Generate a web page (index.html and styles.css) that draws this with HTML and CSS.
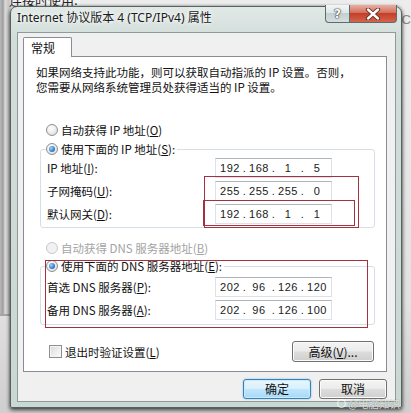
FILE: index.html
```html
<!DOCTYPE html>
<html lang="zh-CN">
<head>
    <meta charset="UTF-8">
    <title>Internet 协议版本 4 (TCP/IPv4) 属性</title>
    <link rel="stylesheet" href="styles.css">
</head>
<body>
<div class="desk">
    <div class="back-win">
        <p class="back-title">连接时使用:</p>
    </div>
    <span class="back-letter">C</span>
</div>

<div class="dialog">
    <div class="titlebar">
        <span class="title">Internet 协议版本 4 (TCP/IPv4) 属性</span>
        <div class="caption-btns">
            <span class="cap-help">?</span>
            <span class="cap-close">
                <svg width="16" height="12" viewBox="0 0 16 12">
                    <path d="M3 1.5 L13 10.5 M13 1.5 L3 10.5" stroke="#5a2a22" stroke-width="4.2" stroke-linecap="round"/>
                    <path d="M3 1.5 L13 10.5 M13 1.5 L3 10.5" stroke="#fff" stroke-width="2.4" stroke-linecap="round"/>
                </svg>
            </span>
        </div>
    </div>

    <div class="client">
        <div class="tabs"><span class="tab">常规</span></div>
        <div class="panel">
            <div class="intro">
                <p>如果网络支持此功能，则可以获取自动指派的 IP 设置。否则，</p>
                <p>您需要从网络系统管理员处获得适当的 IP 设置。</p>
            </div>

            <div class="opt first-opt"><span class="radio"></span>自动获得 IP 地址(<u>O</u>)</div>
            <fieldset class="group ip-group">
                <legend class="opt"><span class="radio on"></span>使用下面的 IP 地址(<u>S</u>):</legend>
                <div class="row">
                    <span>IP 地址(<u>I</u>):</span>
                    <div class="ipbox"><span>192</span><i>.</i><span>168</span><i>.</i><span>1</span><i>.</i><span>5</span></div>
                </div>
                <div class="row">
                    <span>子网掩码(<u>U</u>):</span>
                    <div class="ipbox"><span>255</span><i>.</i><span>255</span><i>.</i><span>255</span><i>.</i><span>0</span></div>
                </div>
                <div class="row">
                    <span>默认网关(<u>D</u>):</span>
                    <div class="ipbox"><span>192</span><i>.</i><span>168</span><i>.</i><span>1</span><i>.</i><span>1</span></div>
                </div>
            </fieldset>

            <div class="opt dns-opt disabled"><span class="radio"></span>自动获得 DNS 服务器地址(<u>B</u>)</div>
            <fieldset class="group dns-group">
                <legend class="opt"><span class="radio on"></span>使用下面的 DNS 服务器地址(<u>E</u>):</legend>
                <div class="row">
                    <span>首选 DNS 服务器(<u>P</u>):</span>
                    <div class="ipbox"><span>202</span><i>.</i><span>96</span><i>.</i><span>126</span><i>.</i><span>120</span></div>
                </div>
                <div class="row">
                    <span>备用 DNS 服务器(<u>A</u>):</span>
                    <div class="ipbox"><span>202</span><i>.</i><span>96</span><i>.</i><span>126</span><i>.</i><span>100</span></div>
                </div>
            </fieldset>

            <div class="bottom-row">
                <div class="check-opt"><span class="check"></span>退出时验证设置(<u>L</u>)</div>
                <button class="btn adv-btn">高级(<u>V</u>)...</button>
            </div>
        </div>
        <div class="actions">
            <button class="btn default-btn">确定</button>
            <button class="btn">取消</button>
        </div>
    </div>
</div>

<div class="mark mark-mask"></div>
<div class="mark mark-gw"></div>
<div class="mark mark-dns"></div>

<span class="watermark"><b class="wm-logo"></b>@电脑知识</span>
</body>
</html>
```

FILE: styles.css
```css
* {
    margin: 0;
    padding: 0;
    box-sizing: border-box;
}

body {
    width: 411px;
    height: 413px;
    overflow: hidden;
    position: relative;
    background: #dedede;
    font-family: "Noto Sans CJK SC", "Noto Sans", sans-serif;
    font-size: 11.5px;
    line-height: 16px;
    color: #111;
}

u {
    text-decoration: underline;
    text-underline-offset: 1px;
}

/* desktop behind the dialog */
.desk {
    position: absolute;
    inset: 0;
    background: linear-gradient(180deg, #ececec 0, #e2e2e2 300px, #cfcfcf 100%);
}

.back-win {
    position: absolute;
    left: 0;
    top: 0;
    width: 80px;
    height: 316px;
    background: linear-gradient(90deg, #b9b9b9 0, #9d9d9d 3px, #dadada 5px, #c4c4c4 9px, #f2f2f2 12px);
    border-bottom: 2px solid #a5a5a5;
}

.back-title {
    position: absolute;
    left: 9px;
    top: -8px;
    font-size: 13px;
    color: #222;
}

.back-letter {
    position: absolute;
    right: 0;
    top: 12px;
    font-family: "Liberation Sans", sans-serif;
    font-size: 13px;
    color: #888;
}

/* window */
.dialog {
    position: absolute;
    left: 10px;
    top: 6px;
    width: 392px;
    height: 402px;
    border: 1px solid #56625f;
    border-radius: 7px 7px 2px 2px;
    background: linear-gradient(180deg, #e1e9e7 0, #d2ddda 30px, #c9d8d3 100%);
    box-shadow: 0 2px 4px rgba(0, 0, 0, .65), 0 0 3px rgba(0, 0, 0, .35);
    display: flex;
    flex-direction: column;
}

.titlebar {
    height: 25px;
    display: flex;
    align-items: flex-start;
    padding: 0 4px 0 6px;
}

.title {
    margin-top: 3px;
    font-family: "Noto Sans", "Noto Sans CJK SC", sans-serif;
    font-size: 12px;
    line-height: 15px;
    color: #1a1a1a;
    text-shadow: 0 0 6px #fff, 0 0 3px #fff;
}

.caption-btns {
    margin-left: auto;
    margin-top: -2px;
    display: flex;
}

.cap-help,
.cap-close {
    height: 18px;
    display: flex;
    align-items: center;
    justify-content: center;
    border: 1px solid #5e6b6c;
    border-top: none;
}

.cap-help {
    width: 25px;
    border-radius: 0 0 0 4px;
    background: linear-gradient(180deg, #f3f6f6 0, #dfe6e7 45%, #c4cfd1 50%, #d5dfe0 100%);
    font-family: "DejaVu Sans", sans-serif;
    font-weight: bold;
    font-size: 12px;
    color: #fff;
    text-shadow: 0 0 1px #333, 0 0 1px #333, 0 0 2px #555;
}

.cap-close {
    width: 47px;
    border-left: none;
    border-radius: 0 0 4px 0;
    background: linear-gradient(180deg, #e8b0a4 0, #d4705c 45%, #c2402a 50%, #d6634a 100%);
}

.client {
    flex: 1;
    margin: 0 5px 5px 6px;
    border: 1px solid #8e9b99;
    background: #f0f0f0;
    padding: 4px 8px 2px 5px;
    display: flex;
    flex-direction: column;
}

.tabs {
    display: flex;
    position: relative;
    z-index: 1;
    margin-bottom: -1px;
}

.tab {
    width: 49px;
    height: 20px;
    padding-left: 7px;
    border: 1px solid #898c95;
    border-bottom: none;
    border-radius: 2px 2px 0 0;
    background: #fff;
    font-size: 12px;
    line-height: 19px;
}

.panel {
    height: 316px;
    border: 1px solid #898c95;
    background: #fff;
    padding: 8px 0 9px 0;
    display: flex;
    flex-direction: column;
}

.intro {
    padding-left: 12px;
    line-height: 15px;
}

.opt {
    display: flex;
    align-items: center;
    height: 16px;
    white-space: nowrap;
}

.first-opt {
    margin: 27px 0 0 22px;
}

.dns-opt {
    margin: 12px 0 0 22px;
}

.disabled {
    color: #a3a3a3;
}

.radio {
    width: 12px;
    height: 12px;
    margin-right: 3px;
    border: 1px solid #8d8f91;
    border-radius: 50%;
    background: radial-gradient(circle at 40% 35%, #fff 0, #f0f0f0 40%, #d6d6d6 100%);
    position: relative;
}

.disabled .radio {
    border-color: #c9c9c9;
    background: #f1f1f1;
}

.radio.on::after {
    content: "";
    position: absolute;
    left: 2px;
    top: 2px;
    width: 6px;
    height: 6px;
    border-radius: 50%;
    background: radial-gradient(circle at 35% 35%, #9fd4ff 0, #3a86d4 55%, #144e96 100%);
}

.group {
    border: 1px solid #d5dfe5;
    border-radius: 3px;
    margin: 3px 11px 0 16px;
    padding: 1px 42px 3px 6px;
}

.dns-group {
    margin-top: 2px;
    padding: 3px 42px 4px 6px;
}

.group legend {
    margin-left: -1px;
    padding-right: 2px;
}

.row {
    display: flex;
    align-items: center;
    justify-content: space-between;
    height: 20px;
    margin-bottom: 3px;
}

.row:last-child {
    margin-bottom: 0;
}

.ipbox {
    width: 117px;
    height: 20px;
    border: 1px solid #dde2e8;
    border-top-color: #b0b5bc;
    padding-left: 2px;
    display: flex;
    align-items: center;
    font-family: "Liberation Sans", sans-serif;
    font-size: 11px;
    letter-spacing: .6px;
    color: #1a1a1a;
}

.ipbox span {
    width: 24px;
    text-align: center;
}

.ipbox i {
    width: 5px;
    font-style: normal;
    text-align: center;
}

.bottom-row {
    margin: 16px 12px 0 25px;
    height: 21px;
    display: flex;
    align-items: center;
    justify-content: space-between;
}

.check-opt {
    display: flex;
    align-items: center;
}

.check {
    width: 13px;
    height: 13px;
    margin-right: 3px;
    border: 1px solid #8e8f8f;
    background: linear-gradient(135deg, #d9d9d9 0, #f0f0f0 60%, #fafafa 100%);
    box-shadow: inset 0 0 0 1px #f4f4f4;
}

.btn {
    height: 21px;
    border: 1px solid #707070;
    border-radius: 3px;
    background: linear-gradient(180deg, #f4f4f4 0, #ebebeb 48%, #dcdcdc 52%, #cfcfcf 100%);
    box-shadow: inset 0 0 0 1px #fbfbfb;
    font-family: inherit;
    font-size: 12px;
    line-height: 18px;
    color: #111;
}

.adv-btn {
    width: 82px;
}

.actions {
    margin-top: 7px;
    display: flex;
    justify-content: flex-end;
    gap: 8px;
}

.actions .btn {
    width: 68px;
    height: 20px;
}

.default-btn {
    border-color: #3c7fb1;
    background: linear-gradient(180deg, #eaf6fd 0, #d9f0fc 48%, #bee6fd 52%, #a7d9f5 100%);
    box-shadow: inset 0 0 0 1px #c8ecff, 0 0 2px #6fb9e8;
}

/* red annotation boxes drawn over the screenshot */
.mark {
    position: absolute;
    border: 1px solid #a3313f;
    pointer-events: none;
}

.mark-mask {
    left: 204px;
    top: 176px;
    width: 155px;
    height: 52px;
}

.mark-gw {
    left: 203px;
    top: 200px;
    width: 152px;
    height: 26px;
}

.mark-dns {
    left: 45px;
    top: 260px;
    width: 323px;
    height: 68px;
}

.watermark {
    position: absolute;
    left: 337px;
    top: 397px;
    display: flex;
    align-items: center;
    gap: 2px;
    font-size: 10.5px;
    line-height: 13px;
    color: rgba(255, 255, 255, .8);
    text-shadow: 0 0 1px rgba(60, 60, 60, .7);
}

.wm-logo {
    width: 9px;
    height: 9px;
    border: 1.5px solid rgba(255, 255, 255, .8);
    border-radius: 50%;
}
```
